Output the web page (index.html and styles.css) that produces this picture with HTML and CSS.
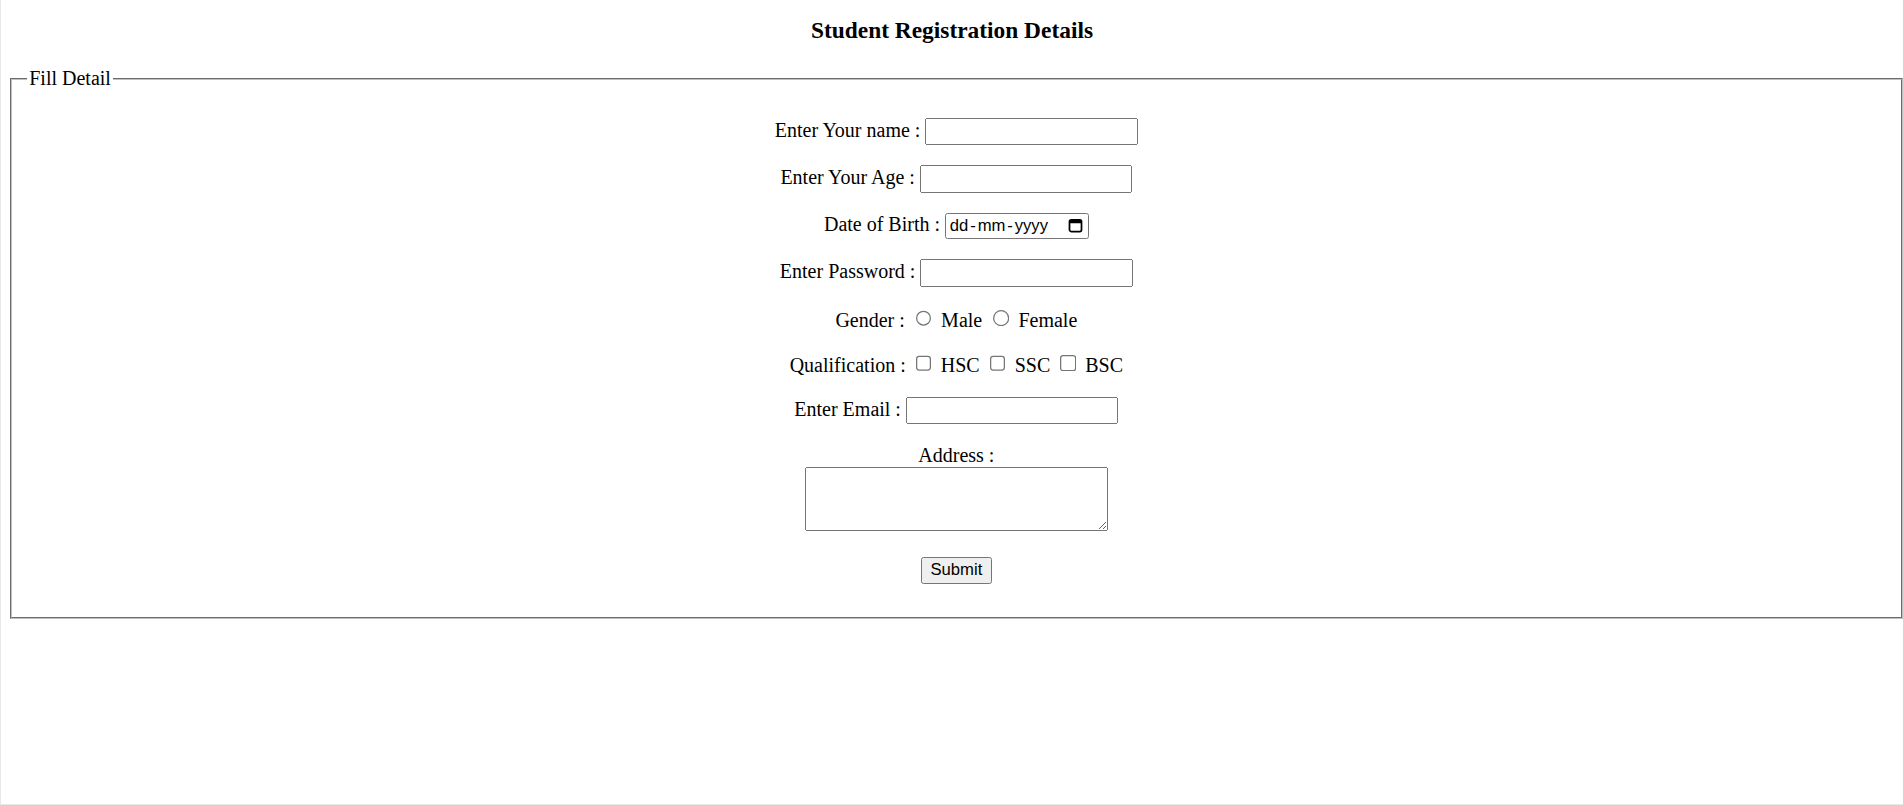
FILE: index.html
```html
<!DOCTYPE html>
<html lang="en">
<head>
<meta charset="utf-8">
<title>Student Registration</title>
<link rel="stylesheet" href="styles.css">
</head>
<body>
<div class="frame">
  <div class="page">
    <h3 class="title">Student Registration Details</h3>
    <form class="form">
      <fieldset class="panel">
        <legend class="panel-legend">Fill Detail</legend>
        <p class="row">Enter Your name : <input type="text" class="field"></p>
        <p class="row">Enter Your Age : <input type="text" class="field"></p>
        <p class="row">Date of Birth : <span class="date" role="textbox" aria-label="Date of Birth"><span class="date-text"><span>dd</span><span class="date-sep">-</span><span>mm</span><span class="date-sep">-</span><span>yyyy</span></span><svg class="date-icon" width="12" height="12" viewBox="0 0 12 12" aria-hidden="true"><rect x="1.2" y="1.4" width="9.6" height="9.4" rx="1.4" fill="none" stroke="#000" stroke-width="1.4"/><rect x="1.2" y="1.4" width="9.6" height="2.8" fill="#000"/></svg></span></p>
        <p class="row">Enter Password : <input type="password" class="field"></p>
        <p class="row">Gender : <input type="radio" name="gender" class="choice"> Male <input type="radio" name="gender" class="choice"> Female</p>
        <p class="row">Qualification : <input type="checkbox" class="choice"> HSC <input type="checkbox" class="choice"> SSC <input type="checkbox" class="choice"> BSC</p>
        <p class="row">Enter Email : <input type="email" class="field"></p>
        <p class="row">Address :<br><textarea class="address"></textarea></p>
        <p class="row row-submit"><input type="submit" value="Submit" class="submit"></p>
      </fieldset>
    </form>
  </div>
</div>
</body>
</html>
```
FILE: styles.css
```css
html, body {
  margin: 0;
  padding: 0;
  background: #ffffff;
}

body {
  font-family: "Liberation Serif", "Times New Roman", serif;
  font-size: 16px;
  color: #000000;
}

.frame {
  height: 805px;
  box-sizing: border-box;
  border-left: 1px solid #e8e8e8;
  border-bottom: 1px solid #e8e8e8;
  overflow: hidden;
}

.page {
  zoom: 1.25;
  padding-top: 13.5px;
}

.title {
  margin: 0 0 18.72px;
  font-size: 18.72px;
  font-weight: bold;
  text-align: center;
}

.form {
  margin: 0;
}

.panel {
  margin: 0 0 0 7px;
  border: 2px groove #c0c0c0;
  padding: 6px 0.75em 10.5px;
}

.panel-legend {
  padding: 0 2px;
  text-align: left;
}

.row {
  margin: 16px 0;
  text-align: center;
}

.row-submit {
  margin-top: 17px;
}

.field,
.date,
.address,
.submit {
  font-family: "Liberation Sans", Arial, sans-serif;
  font-size: 13.333px;
}

.field {
  box-sizing: border-box;
  width: 170px;
  height: 22px;
}

.date {
  display: inline-flex;
  align-items: center;
  justify-content: space-between;
  box-sizing: border-box;
  width: 115px;
  height: 21px;
  padding: 0 3px 0 3px;
  border: 1px solid #767676;
  border-radius: 2px;
  background: #ffffff;
  color: #000000;
  vertical-align: baseline;
}

.date-text {
  display: inline-flex;
  align-items: baseline;
}

.date-sep {
  margin: 0 1.5px;
}

.date-icon {
  display: block;
  margin-right: 1px;
}

.address {
  box-sizing: border-box;
  width: 242px;
  height: 51px;
}

.submit {
  padding: 1px 6px;
}
```
